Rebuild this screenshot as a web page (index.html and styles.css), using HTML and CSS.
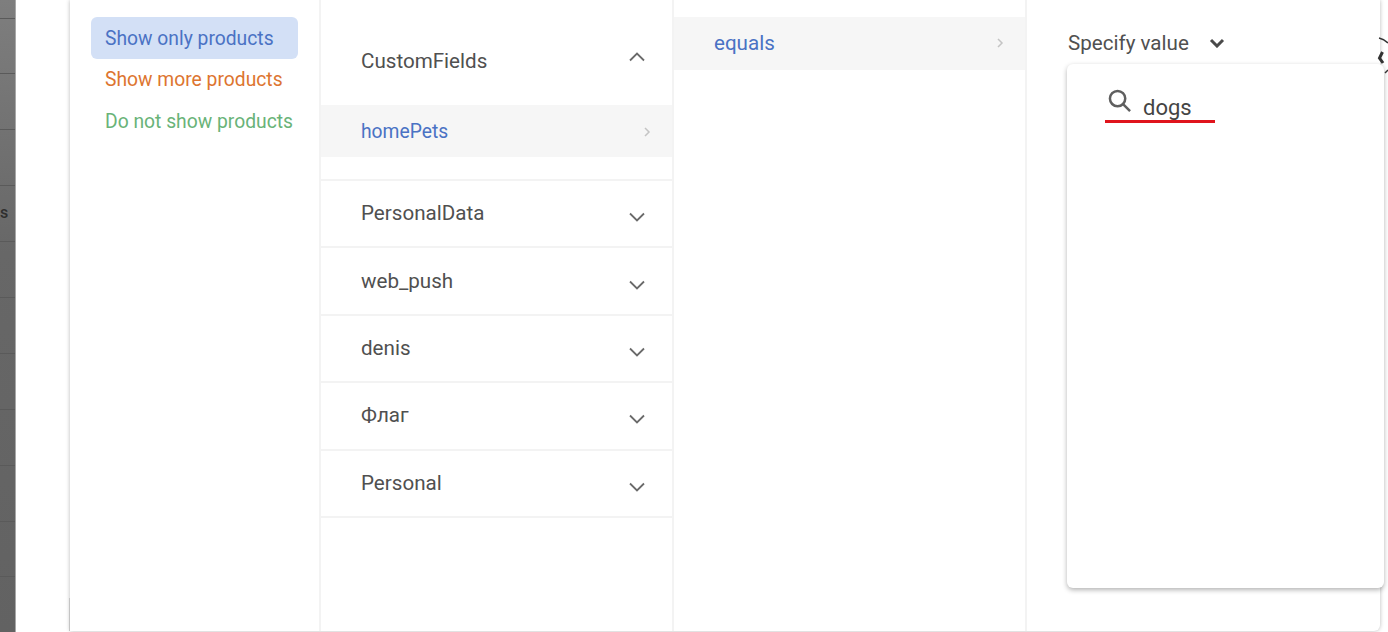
FILE: index.html
```html
<!DOCTYPE html>
<html lang="en">
<head>
  <meta charset="UTF-8">
  <meta name="viewport" content="width=device-width, initial-scale=1.0">
  <title>Product filter</title>
  <link rel="stylesheet" href="styles.css">
</head>
<body>
  <div class="backdrop-strip">
    <span class="strip-row strip-first"></span>
    <span class="strip-row"></span>
    <span class="strip-row"></span>
    <span class="strip-row"></span>
    <span class="strip-row strip-letter">s</span>
    <span class="strip-row"></span>
    <span class="strip-row"></span>
    <span class="strip-row"></span>
    <span class="strip-row"></span>
    <span class="strip-row"></span>
    <span class="strip-row"></span>
  </div>

  <div class="dialog">
    <div class="col col-mode">
      <div class="mode mode-active">Show only products</div>
      <div class="mode mode-more">Show more products</div>
      <div class="mode mode-none">Do not show products</div>
    </div>

    <div class="col col-fields">
      <div class="group-open">
        <div class="group-title">
          <span>CustomFields</span>
          <svg class="chevron" viewBox="0 0 16 10"><path d="M1 8.5l7-7 7 7"/></svg>
        </div>
        <div class="field-active">
          <span>homePets</span>
          <svg class="arrow" viewBox="0 0 8 12"><path d="M2 2l4 4-4 4"/></svg>
        </div>
      </div>
      <div class="group">
        <span>PersonalData</span>
        <svg class="chevron" viewBox="0 0 16 10"><path d="M1 1.5l7 7 7-7"/></svg>
      </div>
      <div class="group">
        <span>web_push</span>
        <svg class="chevron" viewBox="0 0 16 10"><path d="M1 1.5l7 7 7-7"/></svg>
      </div>
      <div class="group">
        <span>denis</span>
        <svg class="chevron" viewBox="0 0 16 10"><path d="M1 1.5l7 7 7-7"/></svg>
      </div>
      <div class="group">
        <span>Флаг</span>
        <svg class="chevron" viewBox="0 0 16 10"><path d="M1 1.5l7 7 7-7"/></svg>
      </div>
      <div class="group">
        <span>Personal</span>
        <svg class="chevron" viewBox="0 0 16 10"><path d="M1 1.5l7 7 7-7"/></svg>
      </div>
    </div>

    <div class="col col-ops">
      <div class="op-active">
        <span>equals</span>
        <svg class="arrow" viewBox="0 0 8 12"><path d="M2 2l4 4-4 4"/></svg>
      </div>
    </div>

    <div class="col col-value">
      <div class="value-select">
        <span>Specify value</span>
        <svg class="select-chevron" viewBox="0 0 16 10"><path d="M2 2l6 6 6-6"/></svg>
      </div>
    </div>
  </div>

  <!-- dropdown hangs over the dialog edge -->
  <div class="dropdown">
    <div class="search">
      <svg class="search-icon" viewBox="0 0 24 24"><circle cx="10" cy="10" r="8"/><path d="M16 16l7 7"/></svg>
      <span class="search-text">dogs</span>
    </div>
  </div>

  <svg class="spinner" viewBox="0 0 12 40"><path d="M3 2Q8 3 12 7"/><path class="spinner-blob" d="M6.5 16L3.5 22L7 27"/><path d="M12 34L9 37"/></svg>
</body>
</html>
```

FILE: styles.css
```css
* {
  box-sizing: border-box;
}

html, body {
  height: 100%;
}

body {
  margin: 0;
  background-color: #fff;
  font-family: Roboto, "Noto Sans", sans-serif;
  font-size: 20.6px;
  color: #505050;
  overflow: hidden;
  position: relative;
  display: flex;
  align-items: flex-start;
}

.backdrop-strip {
  width: 16px;
  height: 632px;
  flex-shrink: 0;
  background: linear-gradient(#7e7e7e, #676767 40%, #626262);
  border-right: 1px solid #a8a8a8;
  display: flex;
  flex-direction: column;
}

.strip-row {
  flex: 0 0 55.9px;
  border-bottom: 1px solid #5a5a5a;
}

.strip-first {
  flex-basis: 18.5px;
}

.strip-letter {
  color: #2e2e2e;
  font-size: 16px;
  font-weight: 500;
  line-height: 20px;
  padding-top: 17px;
}

.dialog {
  position: relative;
  width: 1310px;
  height: 631px;
  margin-left: 54px;
  flex-shrink: 0;
  display: flex;
  background-color: #fff;
  border-radius: 0 0 6px 0;
  box-shadow: 0 0 4px rgba(0, 0, 0, 0.28);
}

/* darker bit of the edge near the bottom */
.dialog::before {
  content: "";
  position: absolute;
  left: -1px;
  bottom: 0;
  width: 1px;
  height: 33px;
  background-color: #c4c4c4;
}

.col {
  height: 100%;
  border-right: 2px solid #f3f3f3;
}

.col-mode {
  width: 251px;
  padding: 17px 21px;
  font-size: 19.3px;
}

.col-fields {
  width: 353px;
}

.col-ops {
  width: 353px;
  padding-top: 17px;
}

.col-value {
  width: 353px;
  border-right: none;
}

.mode {
  height: 41px;
  line-height: 41px;
  padding-left: 14px;
  border-radius: 6px;
  white-space: nowrap;
}

.mode-active {
  height: 42px;
  padding-top: 1px;
  background-color: #d3e0f6;
  color: #4a72c4;
}

.mode-more {
  height: 42px;
  color: #dd7530;
}

.mode-none {
  color: #69b378;
}

.group-open {
  height: 181px;
  padding-top: 37px;
  border-bottom: 2px solid #f3f3f3;
}

.group-title {
  height: 48px;
  padding: 0 27px 0 40px;
  display: flex;
  justify-content: space-between;
  align-items: center;
}

.group-title .chevron {
  margin-top: -8px;
}

.field-active {
  height: 52px;
  margin-top: 20px;
  padding: 1px 21px 0 40px;
  display: flex;
  justify-content: space-between;
  align-items: center;
  background-color: #f6f6f6;
  color: #4a72c4;
  font-size: 19.3px;
}

.group {
  height: 67.4px;
  padding: 0 27px 1px 40px;
  display: flex;
  justify-content: space-between;
  align-items: center;
  border-bottom: 2px solid #f3f3f3;
}

.group .chevron {
  margin-top: 8px;
}

.op-active {
  height: 53px;
  padding: 0 21px 2px 40px;
  display: flex;
  justify-content: space-between;
  align-items: center;
  background-color: #f6f6f6;
  color: #4a72c4;
}

.chevron {
  width: 16px;
  height: 10px;
  fill: none;
  stroke: #6a6a6a;
  stroke-width: 1.8;
}

.arrow {
  width: 8px;
  height: 12px;
  fill: none;
  stroke: #c4c4c4;
  stroke-width: 1.5;
}

.value-select {
  margin: 30px 0 0 41px;
  height: 26px;
  display: flex;
  align-items: center;
  gap: 20px;
}

.select-chevron {
  width: 16px;
  height: 10px;
  fill: none;
  stroke: #4a4a4a;
  stroke-width: 3;
}

.dropdown {
  position: absolute;
  left: 1067px;
  top: 64px;
  width: 317px;
  height: 524px;
  background-color: #fff;
  border-radius: 6px;
  box-shadow: 0 2px 5px rgba(0, 0, 0, 0.3);
  padding: 21px 0 0 38px;
}

.search {
  width: 110px;
  height: 38px;
  border-bottom: 3px solid #e0141c;
  display: flex;
  align-items: flex-start;
}

.search-icon {
  width: 23px;
  height: 23px;
  margin: 4px 0 0 3px;
  fill: none;
  stroke: #5f5f5f;
  stroke-width: 2.6;
}

.search-text {
  margin: 10px 0 0 12px;
  line-height: 26px;
  font-size: 22px;
  color: #444;
}

.spinner {
  position: absolute;
  left: 1376px;
  top: 36px;
  width: 12px;
  height: 40px;
  fill: none;
  stroke: #333;
  stroke-width: 1.5;
}

.spinner-blob {
  stroke-width: 3;
}
```
